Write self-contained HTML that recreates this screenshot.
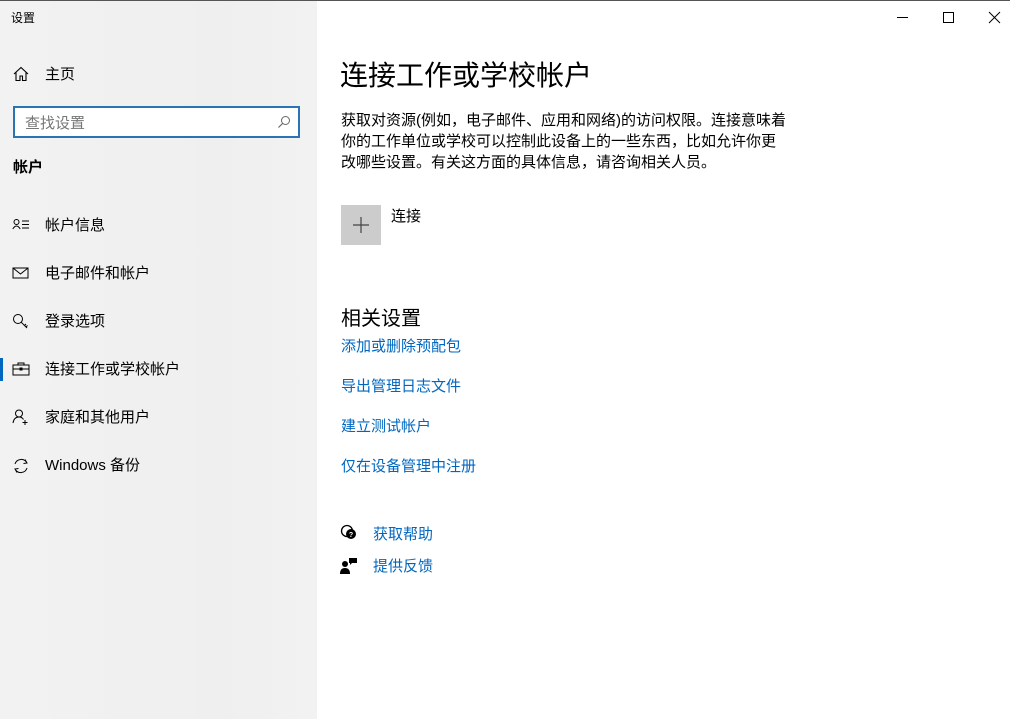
<!DOCTYPE html>
<html><head><meta charset="utf-8"><style>
*{margin:0;padding:0;box-sizing:border-box}
body{width:1010px;height:719px;overflow:hidden;background:#fff;font-family:"Liberation Sans","Noto Sans CJK SC",sans-serif;color:#000;position:relative}
.top{position:absolute;left:0;top:0;width:1010px;height:1px;background:#555}
.side{position:absolute;left:0;top:1px;width:317px;height:718px;background:linear-gradient(90deg,#f2f2f2,#efefef 70%,#f2f2f2)}
.abs{position:absolute;white-space:nowrap}
.nav{position:absolute;left:45px;font-size:15px;color:#000}
.ic{position:absolute;left:12px}
.search{position:absolute;left:13px;top:105px;width:287px;height:32px;border:2px solid #2a74b3;background:#fff}
.link{position:absolute;left:341px;font-size:15px;color:#0067c0}
</style></head><body>
<div class="top"></div>
<div class="side">
<div class="abs" style="left:11px;top:8px;font-size:12px">设置</div>
<svg class="ic" style="top:65px" width="18" height="16" viewBox="0 0 18 16"><path d="M2 8 L9 1.5 L16 8 M4 6.5 V14.5 H8 V10 H10.5 V14.5 H14 V6.5" fill="none" stroke="#000" stroke-width="1.1"/></svg>
<div class="nav" style="top:62px">主页</div>
<div class="search"><span class="abs" style="left:10px;top:4px;font-size:15px;color:#777">查找设置</span>
<svg class="abs" style="right:7px;top:7px" width="14" height="14" viewBox="0 0 14 14"><circle cx="8.5" cy="5.5" r="4" fill="none" stroke="#666" stroke-width="1"/><path d="M5.7 8.3 L1.5 12.5" stroke="#666" stroke-width="1.1"/></svg></div>
<div class="abs" style="left:13px;top:155px;font-size:15px;font-weight:bold">帐户</div>
<svg class="ic" style="top:217px" width="20" height="14" viewBox="0 0 20 14"><circle cx="4.5" cy="4" r="2.5" fill="none" stroke="#000"/><path d="M0.8 11 Q4.5 5 8.2 11 M10 3 H17 M10 6.5 H17 M10 10 H17" fill="none" stroke="#000"/></svg>
<div class="nav" style="top:213px">帐户信息</div>
<svg class="ic" style="top:265px" width="18" height="14" viewBox="0 0 18 14"><rect x="1" y="2" width="15" height="10" fill="none" stroke="#000"/><path d="M1 2 L8.5 8 L16 2" fill="none" stroke="#000"/></svg>
<div class="nav" style="top:261px">电子邮件和帐户</div>
<svg class="ic" style="top:312px" width="18" height="18" viewBox="0 0 18 18"><circle cx="6" cy="6" r="4.5" fill="none" stroke="#000"/><path d="M9.2 9.2 L15 15 M12.5 12.5 L14 11 M14 14 L15.5 12.5" fill="none" stroke="#000"/></svg>
<div class="nav" style="top:309px">登录选项</div>
<div class="abs" style="left:0;top:357px;width:3px;height:23px;background:#0067c0"></div>
<svg class="ic" style="top:361px" width="18" height="14" viewBox="0 0 18 14"><rect x="1" y="3" width="16" height="10" fill="none" stroke="#000"/><path d="M6 3 V1 H12 V3 M1 7 H17 M8 6 H10 V8 H8Z" fill="none" stroke="#000"/></svg>
<div class="nav" style="top:357px">连接工作或学校帐户</div>
<svg class="ic" style="top:408px" width="18" height="16" viewBox="0 0 18 16"><circle cx="7" cy="4.5" r="3.5" fill="none" stroke="#000"/><path d="M1 14 Q2 8 7 8 Q10 8 11.5 10.5 M13 11 V16 M10.5 13.5 H15.5" fill="none" stroke="#000"/></svg>
<div class="nav" style="top:405px">家庭和其他用户</div>
<svg class="ic" style="top:456px" width="18" height="18" viewBox="0 0 18 18"><path d="M3 7 A6.5 6.5 0 0 1 15 6 M15 11 A6.5 6.5 0 0 1 3 12 M13 2.5 L15 6 L11.5 6.5 M5 15.5 L3 12 L6.5 11.5" fill="none" stroke="#000"/></svg>
<div class="nav" style="top:453px">Windows 备份</div>
</div>
<svg class="abs" style="left:896px;top:10px" width="110" height="16" viewBox="0 0 110 16"><path d="M1 7.5 H12" stroke="#000"/><rect x="47.5" y="2.5" width="10" height="10" fill="none" stroke="#000"/><path d="M93 2 L104 13 M104 2 L93 13" stroke="#000"/></svg>
<div class="abs" style="left:340px;top:54px;font-size:28px">连接工作或学校帐户</div>
<div class="abs" style="left:341px;top:110px;font-size:15px;line-height:21px;white-space:nowrap">获取对资源(例如，电子邮件、应用和网络)的访问权限。连接意味着<br>你的工作单位或学校可以控制此设备上的一些东西，比如允许你更<br>改哪些设置。有关这方面的具体信息，请咨询相关人员。</div>
<div class="abs" style="left:341px;top:205px;width:40px;height:40px;background:#ccc"><svg width="40" height="40"><path d="M20 12 V28 M12 20 H28" stroke="#444" stroke-width="1.2"/></svg></div>
<div class="abs" style="left:391px;top:205px;font-size:15px">连接</div>
<div class="abs" style="left:341px;top:302px;font-size:20px">相关设置</div>
<div class="link" style="top:335px">添加或删除预配包</div>
<div class="link" style="top:375px">导出管理日志文件</div>
<div class="link" style="top:415px">建立测试帐户</div>
<div class="link" style="top:455px">仅在设备管理中注册</div>
<svg class="abs" style="left:340px;top:524px" width="18" height="18" viewBox="0 0 18 18"><circle cx="7" cy="7" r="5.5" fill="none" stroke="#000" stroke-width="1.3"/><circle cx="11" cy="10" r="5" fill="#000"/><text x="11" y="13" font-size="7" fill="#fff" text-anchor="middle" font-weight="bold" font-family="Liberation Sans">?</text></svg>
<div class="link" style="left:373px;top:523px">获取帮助</div>
<svg class="abs" style="left:340px;top:557px" width="18" height="18" viewBox="0 0 18 18"><circle cx="5" cy="7" r="3" fill="#000"/><path d="M0 17 Q0 11 5 11 Q10 11 10 17Z" fill="#000"/><path d="M9 1 H17 V6 H12 L10 8 V6 H9Z" fill="#000"/></svg>
<div class="link" style="left:373px;top:555px">提供反馈</div>
</body></html>
